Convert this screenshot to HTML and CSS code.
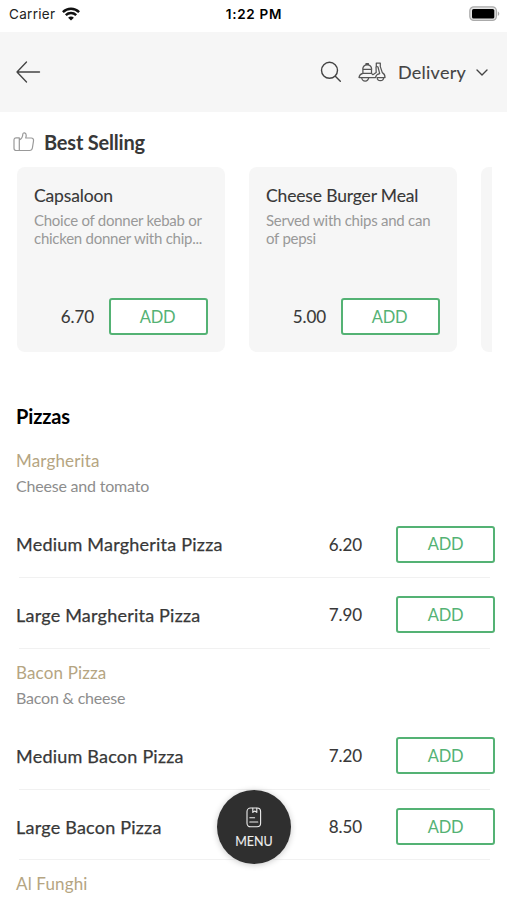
FILE: index.html
```html
<!DOCTYPE html>
<html lang="en">
<head>
<meta charset="utf-8">
<meta name="viewport" content="width=device-width, initial-scale=1">
<title>Menu</title>
<link rel="stylesheet" href="styles.css">
</head>
<body>
<div class="status">
  <div class="carrier"><span>Carrier</span>
    <svg width="18" height="14" viewBox="0 0 18 14" fill="none" stroke="#111" stroke-width="2.5"><path d="M.9 5.1C5.5.7 12.5.7 17.1 5.1M3.8 8.2c3-2.8 7.4-2.8 10.4 0"/><path d="M9 13.6 6.1 10.7c1.7-1.5 4.1-1.5 5.8 0z" fill="#111" stroke="none"/></svg>
  </div>
  <time>1:22 PM</time>
  <svg class="battery" width="31" height="16" viewBox="0 0 31 16"><rect x=".8" y=".8" width="26.6" height="13.6" rx="4" fill="#e4e4e4" stroke="#aaa" stroke-width="1.2"/><rect x="3" y="3" width="22.3" height="9.5" rx="1.6" fill="#000"/><path d="M28.8 5.3q3 2.3 0 4.8z" fill="#aaa"/></svg>
</div>
<header class="bar">
  <svg width="25" height="22" viewBox="0 0 25 22" fill="none" stroke="#444" stroke-width="1.35" stroke-linecap="round" stroke-linejoin="round"><path d="M23.5 11H1M10.5 1 1 11l9.5 10"/></svg>
  <div class="tools">
    <svg width="22" height="22" viewBox="0 0 22 22" fill="none" stroke="#444" stroke-width="1.4" stroke-linecap="round"><circle cx="9.5" cy="9.3" r="8"/><path d="m15.3 15.2 5 5"/></svg>
    <svg class="scooter" width="28" height="20" viewBox="0 0 28 20" fill="none" stroke="#555" stroke-width="1.25" stroke-linecap="round" stroke-linejoin="round"><path d="M4.7 7.3C4.9 4.6 6.6 2.8 9.2 2.8s4.3 1.8 4.5 4.5zM8 2.7V1.5h2.4v1.2M4.9 7.4v4h8.6V7.4M4.9 11.4C2.6 11.9 1.3 13.4 1 15.5h16.5c.4-2 1.8-3.4 4.2-3.8L20 5l-1.7-.8V1h4v3.6l2 6c1.7.8 2.7 2 2.7 4.9h-7.8M18 4.8l.2 5.7-3.3 2.2-1.4-1.3"/><path d="M3.7 15.5a3.5 3.5 0 0 0 7 0M19.2 15.5a3.2 3.2 0 0 0 6.4 0"/></svg>
    <span class="mode">Delivery</span>
    <svg class="chev" width="12" height="8" viewBox="0 0 12 8" fill="none" stroke="#444" stroke-width="1.4" stroke-linecap="round" stroke-linejoin="round"><path d="m1 2 5 5 5-5"/></svg>
  </div>
</header>
<main>
  <h2 class="best">
    <svg width="22" height="20" viewBox="0 0 22 20" fill="none" stroke="#999" stroke-width="1.2" stroke-linejoin="round"><path d="M6.3 5.8H3.2Q1 5.8 1 8v8.3q0 2.2 2.2 2.2h3.1zM6.3 8c2.2-1.2 3.4-2.8 3.5-5.8.1-2 3.1-1.8 3.4.8.1 1.3-.2 2.2-.5 3h5.5c1.8 0 2.6 1.3 2.3 3l-1.1 7c-.3 1.7-1.1 2.5-2.8 2.5H6.3"/></svg>
    <span>Best Selling</span>
  </h2>
  <div class="cards">
    <article class="card"><h3>Capsaloon</h3><p>Choice of donner kebab or chicken donner with chip...</p><div class="buy"><span class="price">6.70</span><button class="add">ADD</button></div></article>
    <article class="card"><h3>Cheese Burger Meal</h3><p>Served with chips and can of pepsi</p><div class="buy"><span class="price">5.00</span><button class="add">ADD</button></div></article>
    <article class="card"></article>
  </div>
  <h2 class="category">Pizzas</h2>
  <section class="group">
    <div class="head"><h3>Margherita</h3><p>Cheese and tomato</p></div>
    <div class="row"><span class="name">Medium Margherita Pizza</span><span class="price">6.20</span><button class="add">ADD</button></div>
    <div class="row"><span class="name">Large Margherita Pizza</span><span class="price">7.90</span><button class="add">ADD</button></div>
  </section>
  <section class="group">
    <div class="head"><h3>Bacon Pizza</h3><p>Bacon &amp; cheese</p></div>
    <div class="row"><span class="name">Medium Bacon Pizza</span><span class="price">7.20</span><button class="add">ADD</button></div>
    <div class="row"><span class="name">Large Bacon Pizza</span><span class="price">8.50</span><button class="add">ADD</button></div>
  </section>
  <section class="group"><div class="head"><h3>Al Funghi</h3></div></section>
</main>
<button class="menu">
  <svg width="16" height="21" viewBox="0 0 16 21" fill="none" stroke="#eee" stroke-width="1.1" stroke-linecap="round" stroke-linejoin="round"><rect x="1" y="1" width="13.6" height="18.8" rx="3.5"/><path d="M6.8 1.2v4.2l2-1.4 2 1.4V1.2M3.8 10.8h4.8M3.8 15h8"/></svg>
  <span>MENU</span>
</button>
</body>
</html>
```
FILE: styles.css
```css
* { box-sizing: border-box; margin: 0; padding: 0; }
body { height: 900px; overflow: hidden; background: #fff; color: #383838; font-family: Lato, sans-serif; font-size: 17px; }
h2, h3 { font-weight: 400; }
svg { display: block; flex: none; }
button { font: inherit; }

.status { height: 32px; padding: 0 7px 5px 9px; display: grid; grid-template-columns: 1fr auto 1fr; align-items: center; font-family: Inter, sans-serif; font-size: 13.5px; color: #222; }
.carrier { display: flex; align-items: center; gap: 6px; letter-spacing: .3px; }
.carrier svg { margin-left: 1px; }
.status time { font-weight: 600; color: #000; letter-spacing: .7px; margin-left: -1px; }
.battery { justify-self: end; }

.bar { height: 80px; padding: 0 19px 0 16px; display: flex; align-items: center; justify-content: space-between; background: #f6f6f6; }
.tools { display: flex; align-items: center; }
.scooter { margin-left: 16px; }
.mode { margin-left: 12px; font-size: 18px; line-height: 24px; letter-spacing: .25px; color: #444; -webkit-text-stroke: .1px; }
.chev { margin-left: 10px; }

.best { height: 55px; padding: 5px 0 0 13px; display: flex; align-items: center; gap: 9px; font-size: 20px; font-weight: 700; letter-spacing: -.2px; }
.cards { display: flex; gap: 24px; height: 185px; margin: 0 15px 0 17px; overflow: hidden; }
.card { flex: 0 0 208px; padding: 17px; border-radius: 8px; background: #f6f6f6; display: flex; flex-direction: column; }
.card h3 { font-size: 17.5px; line-height: 23px; letter-spacing: -.15px; -webkit-text-stroke: .1px; }
.card p { margin-top: 4px; font-size: 15px; line-height: 18px; letter-spacing: -.26px; color: #999; }
.buy { margin-top: auto; display: flex; align-items: center; justify-content: flex-end; gap: 15px; }
.price { font-size: 17px; letter-spacing: -.1px; -webkit-text-stroke: .1px; }
.add { width: 99px; height: 37px; border: 2px solid #54b274; border-radius: 3px; background: #fff; color: #54b274; font-size: 16.5px; letter-spacing: -.2px; }
.buy .add { padding-right: 2px; }

.category { height: 85px; padding: 52px 16px 0; font-size: 20px; line-height: 24px; font-weight: 700; letter-spacing: -.15px; color: #000; }
.head { height: 70.5px; padding: 13px 16px 0; }
.head h3 { font-size: 17px; line-height: 22px; letter-spacing: .15px; color: #b5a582; }
.head p { margin-top: 3px; font-size: 16px; line-height: 22px; letter-spacing: -.2px; color: #8d8d8d; }
.row { height: 70.6px; margin: 0 12px 0 16px; padding-top: 3px; display: grid; grid-template-columns: 1fr auto 99px; column-gap: 34px; align-items: center; background: linear-gradient(#f1f1f1, #f1f1f1) 3px 100% / 471px 1px no-repeat; }
.name { font-size: 18px; letter-spacing: .22px; -webkit-text-stroke: .25px; }

.menu { position: absolute; left: 217px; top: 790px; width: 74px; height: 74px; border: 0; border-radius: 50%; display: flex; flex-direction: column; align-items: center; padding-top: 17px; gap: 6px; background: #2f2f2f; color: #eee; font-size: 12.5px; line-height: 16px; -webkit-text-stroke: .1px; box-shadow: 0 1px 6px rgba(0, 0, 0, .22); }
```
